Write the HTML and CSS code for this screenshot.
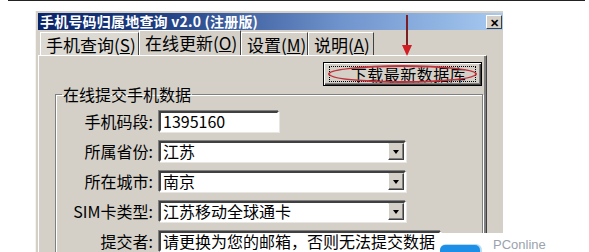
FILE: index.html
```html
<!DOCTYPE html>
<html lang="zh">
<head>
<meta charset="utf-8">
<title>手机号码归属地查询</title>
<link rel="stylesheet" href="styles.css">
</head>
<body>
<div class="screen">
  <div class="topline"></div>
  <div class="window">
    <div class="titlebar">
      <span class="title">手机号码归属地查询 v2.0 (注册版)</span>
      <span class="close">✕</span>
    </div>
    <div class="tabs">
      <div class="tab t1">手机查询(<u>S</u>)</div>
      <div class="tab t2 sel">在线更新(<u>O</u>)</div>
      <div class="tab t3">设置(<u>M</u>)</div>
      <div class="tab t4">说明(<u>A</u>)</div>
    </div>
    <div class="panel">
      <div class="btnrow">
        <div class="button"><span class="focus">下载最新数据库</span><span class="ellipse"></span></div>
      </div>
      <fieldset class="group">
        <legend>在线提交手机数据</legend>
        <div class="form">
          <label class="lbl">手机码段:</label>
          <div class="field w1">1395160</div>
          <label class="lbl">所属省份:</label>
          <div class="field combo"><span class="val">江苏</span><span class="drop"></span></div>
          <label class="lbl">所在城市:</label>
          <div class="field combo"><span class="val">南京</span><span class="drop"></span></div>
          <label class="lbl">SIM卡类型:</label>
          <div class="field combo"><span class="val">江苏移动全球通卡</span><span class="drop"></span></div>
          <label class="lbl">提交者:</label>
          <div class="field w5">请更换为您的邮箱，否则无法提交数据</div>
        </div>
      </fieldset>
    </div>
  </div>
  <div class="arrow"><span class="shaft"></span><span class="head"></span></div>
  <div class="watermark"><span class="logo"></span><span class="wm">PConline</span></div>
</div>
</body>
</html>
```
FILE: styles.css
```css
html, body {
  margin: 0;
  padding: 0;
  background: #fff;
}
.screen {
  position: relative;
  width: 589px;
  height: 252px;
  overflow: hidden;
  background: #fff;
  font-family: "Noto Sans CJK SC", "Noto Sans", sans-serif;
  color: #000;
}
.topline {
  height: 1px;
  margin-left: 8px;
  width: 577px;
  background: #222;
}
.window {
  margin-top: 10px;
  margin-left: 35px;
  width: 468px;
  height: 250px;
  background: #d4d0c8;
  box-sizing: border-box;
  padding: 2px 0 0 2px;
  border-left: 1px solid #f4f3f0;
}
.titlebar {
  height: 17px;
  width: 465px;
  display: flex;
  align-items: center;
  justify-content: space-between;
  background: linear-gradient(to right, #0a246a 0%, #1c3c80 25%, #6f93cc 65%, #a6caf0 100%);
  box-sizing: border-box;
  padding: 0 1px 0 2px;
}
.title {
  color: #fff;
  font-weight: bold;
  font-size: 14px;
  line-height: 17px;
  letter-spacing: 0.2px;
  white-space: nowrap;
}
.close {
  width: 16px;
  height: 14px;
  box-sizing: border-box;
  background: #d4d0c8;
  border: 1px solid;
  border-color: #fff #404040 #404040 #fff;
  font-size: 11px;
  line-height: 12px;
  text-align: center;
  font-weight: bold;
  color: #000;
}
.tabs {
  display: flex;
  height: 25px;
  align-items: flex-end;
  padding-left: 2px;
}
.tab {
  font-size: 17px;
  line-height: 23px;
  height: 23px;
  padding: 0 3px 0 5px;
  box-sizing: border-box;
  border-left: 1px solid #fff;
  border-top: 1px solid #fff;
  border-right: 1px solid #404040;
  white-space: nowrap;
  background: #d4d0c8;
}
.tab u {
  text-decoration: underline;
}
.t1 { width: 99px; background: #dcd9d2; }
.t2 { width: 102px; height: 25px; line-height: 24px; }
.t3 { width: 67px; }
.t4 { width: 66px; }
.panel {
  width: 449px;
  height: 200px;
  box-sizing: border-box;
  border-top: 1px solid #fff;
  border-left: 1px solid #fff;
  border-right: 1px solid #404040;
  box-shadow: inset -2px 0 #808080;
  padding-top: 6px;
}
.btnrow {
  display: flex;
  justify-content: flex-end;
  padding-right: 4px;
}
.button {
  position: relative;
  width: 159px;
  height: 24px;
  box-sizing: border-box;
  border: 1px solid #000;
  box-shadow: inset 1px 1px #fff, inset -1px -1px #404040, inset -2px -2px #808080;
  display: flex;
  align-items: center;
  justify-content: center;
}
.focus {
  display: block;
  width: 147px;
  height: 16px;
  box-sizing: border-box;
  border: 1px dotted #000;
  font-size: 16px;
  line-height: 14px;
  text-align: center;
  padding-left: 12px;
  letter-spacing: 0.5px;
}
.ellipse {
  position: absolute;
  left: 4px;
  top: 2px;
  width: 149px;
  height: 18px;
  box-sizing: border-box;
  border: 2px solid #c0303a;
  border-radius: 50%;
}
.group {
  margin: 0 0 0 16px;
  width: 428px;
  height: 200px;
  box-sizing: border-box;
  border: 1px solid #808080;
  box-shadow: inset 1px 1px #fff, 1px 1px #fff;
  padding: 9px 0 0 0;
}
.group legend {
  font-size: 16px;
  line-height: 16px;
  padding: 0 1px;
  margin-left: 6px;
}
.form {
  display: grid;
  grid-template-columns: 97px auto;
  column-gap: 6px;
  row-gap: 9px;
  justify-items: start;
  align-items: center;
}
.lbl {
  justify-self: end;
  font-size: 16px;
  line-height: 21px;
  white-space: nowrap;
}
.field {
  height: 21px;
  box-sizing: border-box;
  background: #fff;
  border: 2px solid;
  border-color: #404040 #fff #fff #404040;
  box-shadow: -1px -1px #808080, 1px 1px #e8e6e2;
  font-size: 16px;
  line-height: 17px;
  padding-left: 2px;
  white-space: nowrap;
}
.w1 { width: 120px; }
.w5 { width: 282px; }
.combo {
  width: 247px;
  display: flex;
  justify-content: space-between;
  padding-right: 0;
}
.drop {
  width: 16px;
  height: 17px;
  box-sizing: border-box;
  background: #d4d0c8;
  border: 1px solid;
  border-color: #d4d0c8 #404040 #404040 #fff;
  box-shadow: inset -1px -1px #808080;
  position: relative;
}
.drop::after {
  content: "";
  position: absolute;
  left: 4px;
  top: 6px;
  border-left: 3.5px solid transparent;
  border-right: 3.5px solid transparent;
  border-top: 4px solid #000;
}
.arrow {
  position: absolute;
  left: 402px;
  top: 15px;
  width: 10px;
  display: flex;
  flex-direction: column;
  align-items: center;
}
.shaft {
  width: 2px;
  height: 30px;
  background: #7a2024;
}
.head {
  width: 0;
  height: 0;
  border-left: 5px solid transparent;
  border-right: 5px solid transparent;
  border-top: 11px solid #d21d24;
}
.watermark {
  position: absolute;
  left: 440px;
  top: 233px;
  width: 149px;
  height: 19px;
  background: #fff;
  display: flex;
  align-items: flex-start;
  gap: 13px;
}
.logo {
  margin-top: 12px;
  width: 40px;
  height: 12px;
  background: #1e8fe6;
  border-radius: 5px 5px 0 0;
  box-shadow: 1px 0 0 1px #b8dcf5;
}
.wm {
  margin-top: 5px;
  font-family: "Liberation Sans", sans-serif;
  font-size: 13px;
  line-height: 14px;
  color: #9aa3ad;
}
```
